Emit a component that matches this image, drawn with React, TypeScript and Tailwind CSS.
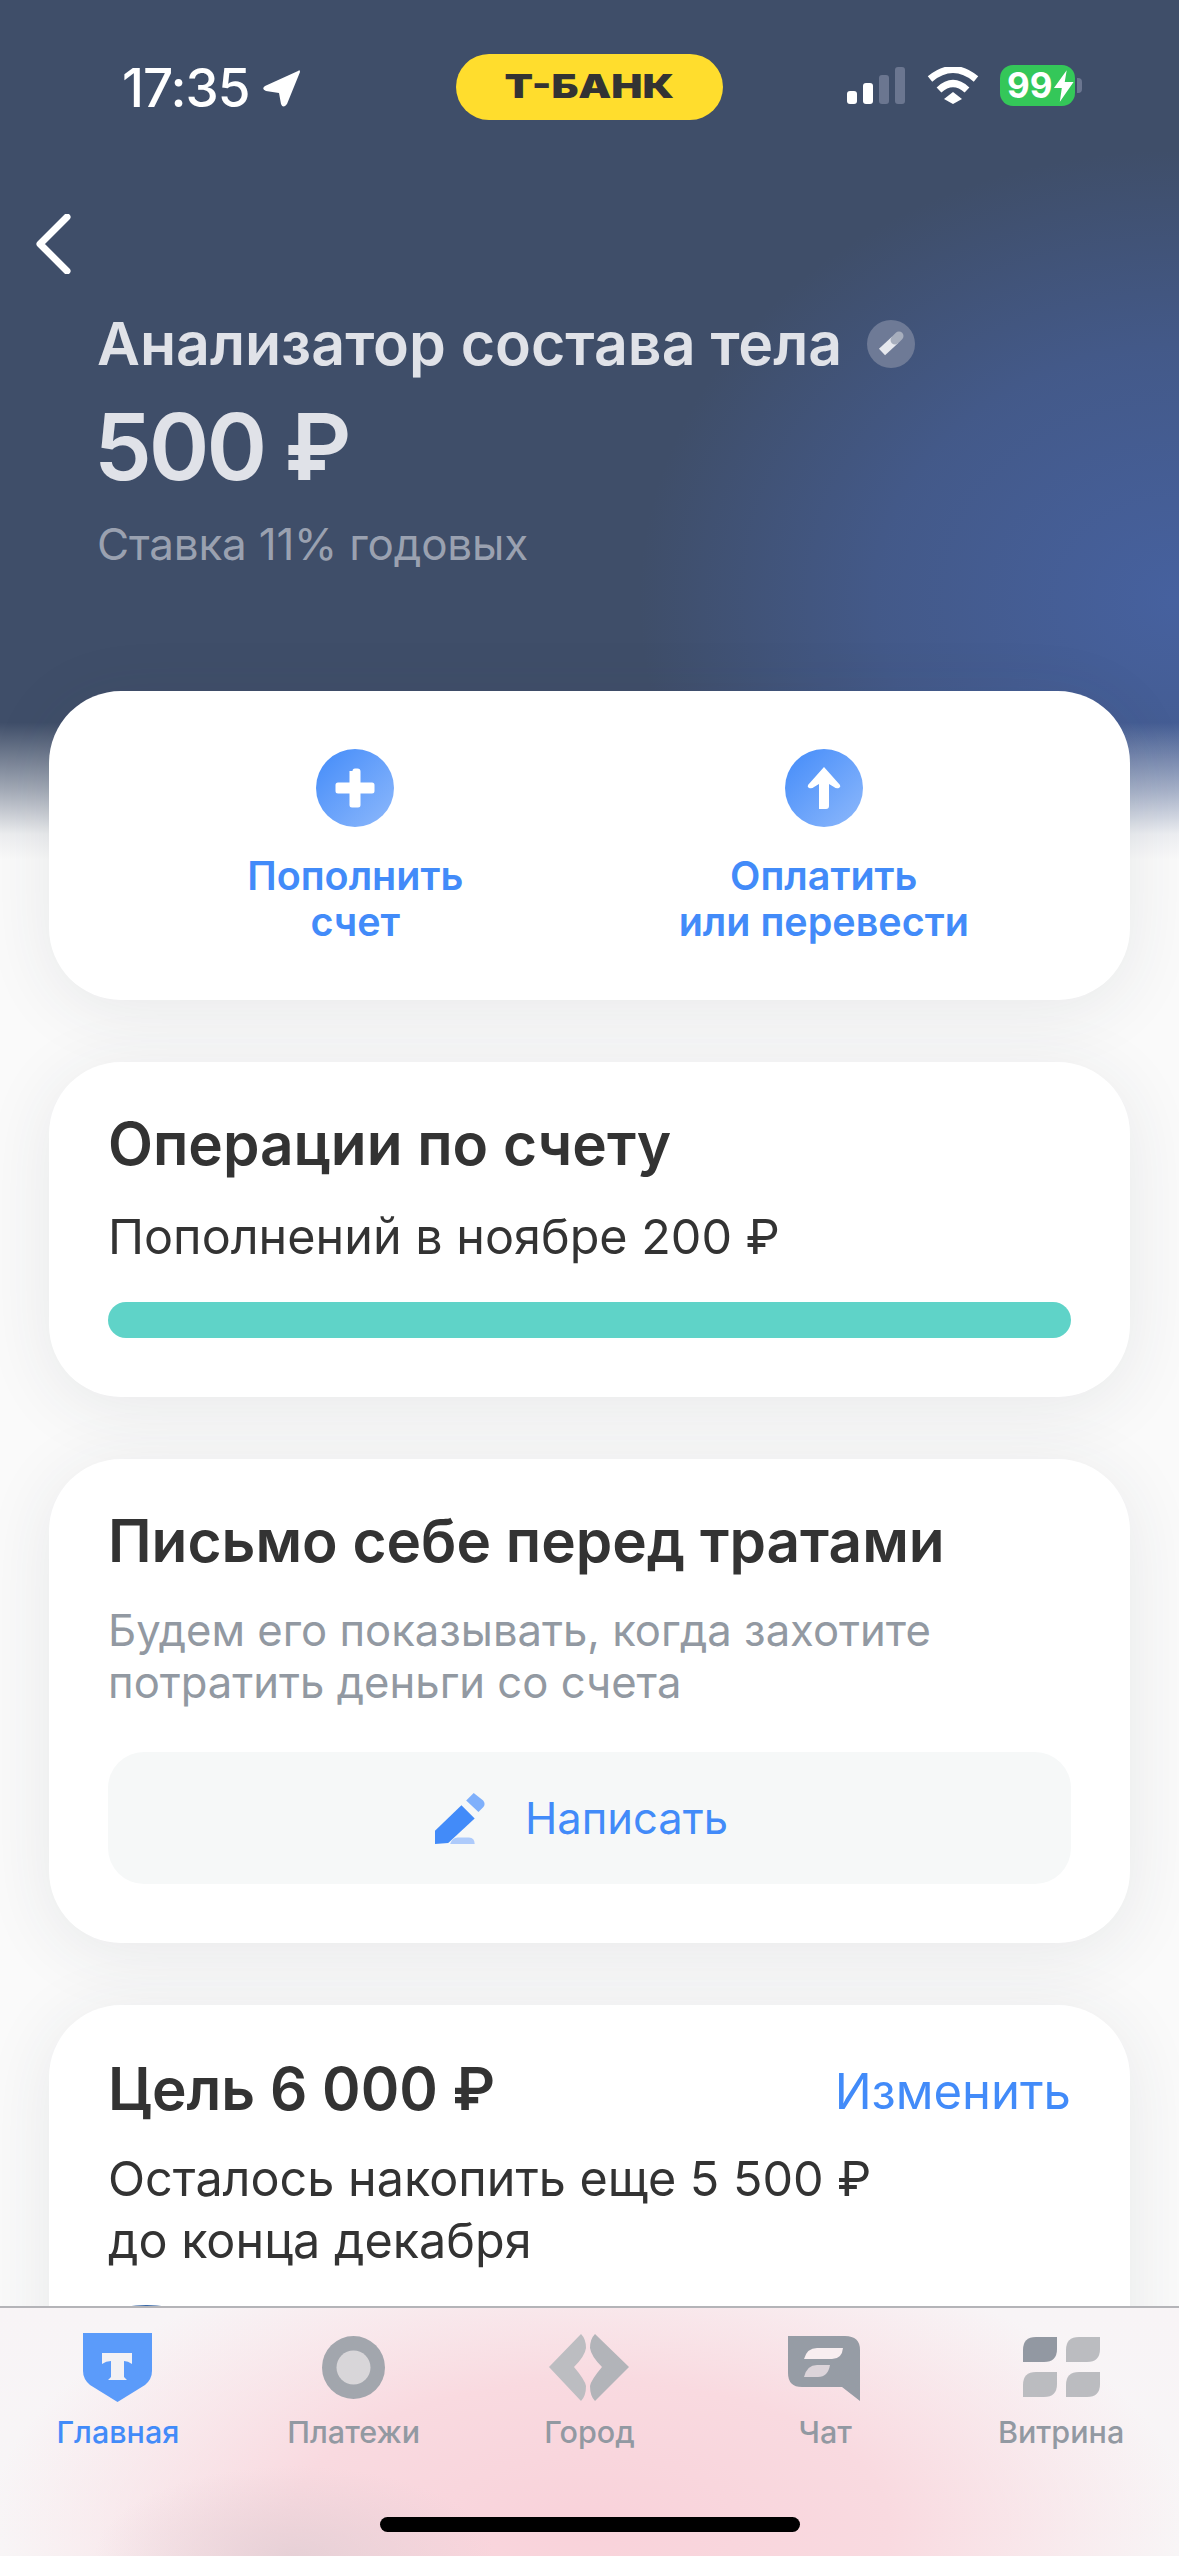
import React from 'react';

const font = { fontFamily: 'Inter, "Noto Sans", sans-serif' };

const StatusBar = () => (
  <div className="flex h-[142px] items-start justify-between pl-[122px] pr-[104px] pt-[54px]">
    <div className="flex w-[216px] items-center gap-[12px] pt-[6px]">
      <span className="text-[53px] font-medium leading-[56px] tracking-[-1px] text-white">17:35</span>
      <svg width="40" height="40" viewBox="0 0 40 40" className="mt-[2px]">
        <path d="M36 2 Q38 0 38 3 L25 35 Q21 40 19 35 L17 24 L4 22 Q-1 20 3 17 Z" fill="#fff" />
      </svg>
    </div>
    <div className="flex h-[66px] w-[267px] items-center justify-center rounded-[33px] bg-[#ffdd2d] text-[33px] font-black text-[#333]">
      <span className="inline-block scale-x-[1.26]">Т-БАНК</span>
    </div>
    <div className="flex w-[235px] items-start justify-end pt-[13px]">
      <div className="flex h-[37px] items-end gap-[6px]">
        <div className="h-[13px] w-[10px] rounded-[3px] bg-white" />
        <div className="h-[21px] w-[10px] rounded-[3px] bg-white" />
        <div className="h-[29px] w-[10px] rounded-[3px] bg-[#6b7690]" />
        <div className="h-[37px] w-[10px] rounded-[3px] bg-[#6b7690]" />
      </div>
      <svg width="52" height="38" viewBox="0 0 52 38" className="ml-[22px]">
        <path d="M26 26 L35 33 L26 38 L17 33 Z" fill="#fff" transform="translate(0 -1)" />
        <path d="M12 23 Q26 10 40 23" stroke="#fff" strokeWidth="7" fill="none" />
        <path d="M3 12 Q26 -7 49 12" stroke="#fff" strokeWidth="7" fill="none" />
      </svg>
      <div className="relative ml-[21px] flex h-[41px] w-[75px] -translate-y-[2px] items-center justify-start rounded-[13px] bg-[#34c759] pl-[7px] text-[35px] font-bold leading-none text-white">
        99
        <svg width="22" height="32" viewBox="0 0 22 32" className="ml-[1px]">
          <path d="M14 0 L1 18 H9 L7 32 L21 12 H12 Z" fill="#fff" />
        </svg>
        <div className="absolute left-[77px] top-[13px] h-[15px] w-[5px] rounded-r-[4px] bg-[#6b7690]" />
      </div>
    </div>
  </div>
);

const Card = ({ children, className = '' }: { children: React.ReactNode; className?: string }) => (
  <div className={`rounded-[72px] bg-white shadow-[0_10px_70px_rgba(40,50,70,0.09)] ${className}`}>{children}</div>
);

const ActionButton = ({ icon, lines }: { icon: React.ReactNode; lines: string[] }) => (
  <div className="flex flex-col items-center">
    <div className="flex h-[78px] w-[78px] items-center justify-center rounded-full bg-gradient-to-br from-[#428bf9] to-[#8db8fb]">{icon}</div>
    <div className="mt-[26px] text-center text-[39.5px] font-semibold leading-[46px] text-[#428bf9]">
      {lines.map(l => (
        <div key={l}>{l}</div>
      ))}
    </div>
  </div>
);

const Tab = ({ icon, label, active }: { icon: React.ReactNode; label: string; active?: boolean }) => (
  <div className="flex flex-col items-center">
    <div className="flex h-[72px] items-center justify-center">{icon}</div>
    <span className={`mt-[11px] text-[30.5px] font-medium leading-[36px] ${active ? 'text-[#428bf9]' : 'text-[#9299a2]'}`}>{label}</span>
  </div>
);

const LEAF = 'M0 13 Q0 0 13 0 H34 V12 Q34 25 21 25 H0 Z';

const TabBar = () => (
  <div className="absolute bottom-0 left-0 h-[250px] w-full border-t-[2px] border-[#b4b4b8] bg-[radial-gradient(ellipse_200px_90px_at_25%_100%,rgba(226,206,212,0.8)_0%,rgba(226,206,212,0)_100%),radial-gradient(ellipse_600px_290px_at_50%_88%,#f9d2da_0%,#f9dae0_50%,rgba(248,240,243,0)_100%),linear-gradient(#f8f4f6,#f8f6f7)] pt-[23px]">
    <div className="grid grid-cols-5">
      <Tab
        active
        label="Главная"
        icon={
          <svg width="69" height="69" viewBox="0 0 69 69">
            <path d="M0 0 H69 V38 Q69 46 62 52 L34.5 69 L7 52 Q0 46 0 38 Z" fill="#5b9bfa" />
            <path d="M19 20 H49 V31 Q45 28 41 28 V44 L44 47 H25 L28 44 V28 Q23 28 19 31 Z" fill="#f3f1f4" />
          </svg>
        }
      />
      <Tab
        label="Платежи"
        icon={
          <svg width="63" height="63" viewBox="0 0 63 63">
            <circle cx="31.5" cy="31.5" r="31.5" fill="#a2a6ad" />
            <circle cx="31.5" cy="31.5" r="17" fill="#d8d6d9" />
          </svg>
        }
      />
      <Tab
        label="Город"
        icon={
          <svg width="80" height="67" viewBox="0 0 80 67">
            <path d="M32 0 L0 33 L32 67 Q37 62 37 52 Q36 46 25 33 Q36 22 37 14 Q37 5 32 0 Z" fill="#bcbdc1" />
            <path d="M46 0 L80 33 L46 67 Q41 62 41 52 Q42 46 53 33 Q42 22 41 14 Q41 5 46 0 Z" fill="#b2b4b9" />
          </svg>
        }
      />
      <Tab
        label="Чат"
        icon={
          <svg width="72" height="65" viewBox="0 0 72 65" className="-translate-x-[1px] translate-y-[1px]">
            <path d="M0 0 H57 Q72 0 72 14 V65 L54 51 H14 Q0 51 0 37 Z" fill="#969ca5" />
            <path d="M16 23 Q19 12 29 12 H55 Q54 23 44 23 Z" fill="#f8eef0" />
            <path d="M16 41 Q19 29 29 29 H42 Q40 41 30 41 Z" fill="#dcd4da" />
          </svg>
        }
      />
      <Tab
        label="Витрина"
        icon={
          <svg width="77" height="60" viewBox="0 0 77 60">
            <path d={LEAF} fill="#9298a2" />
            <path d={LEAF} fill="#bbbcc0" transform="translate(43 0)" />
            <path d={LEAF} fill="#bbbcc0" transform="translate(0 35)" />
            <path d={LEAF} fill="#bbbcc0" transform="translate(43 35)" />
          </svg>
        }
      />
    </div>
    <div className="absolute bottom-[24px] left-[380px] h-[15px] w-[420px] rounded-full bg-black" />
  </div>
);

export default function App() {
  return (
    <div className="relative h-[2556px] w-[1179px] overflow-hidden bg-[#fafafa]" style={font}>
      <div className="absolute left-0 top-0 h-[860px] w-full bg-[linear-gradient(to_bottom,rgba(250,250,250,0)_84%,rgba(250,250,250,0.55)_92%,rgba(250,250,250,0.93)_97%,#fafafa_100%),radial-gradient(ellipse_540px_450px_at_100%_600px,#46619f_0%,rgba(70,97,159,0.6)_55%,rgba(63,78,105,0)_100%),linear-gradient(#3f4e69,#3f4e69)]" />
      <div className="relative">
        <StatusBar />
        <div className="pl-[36px]">
          <svg width="36" height="60" viewBox="0 0 36 60" className="mt-[72px]">
            <path d="M31 3 L4 30 L31 57" stroke="#fff" strokeWidth="7" fill="none" strokeLinecap="round" strokeLinejoin="round" />
          </svg>
        </div>
        <div className="mt-[35px] pl-[97px]">
          <div className="flex items-center">
            <span className="text-[59px] font-semibold leading-[70px] text-[#e0e2e8]">Анализатор состава тела</span>
            <div className="ml-[25px] flex h-[48px] w-[48px] items-center justify-center rounded-full bg-[#6e7a96]">
              <svg width="48" height="48" viewBox="0 0 48 48">
                <path d="M15 32 L28 20" stroke="#e6e8ee" strokeWidth="9" />
                <path d="M28 20 L32 16" stroke="#a7aebd" strokeWidth="9" strokeLinecap="round" />
              </svg>
            </div>
          </div>
          <div className="-ml-[3px] mt-[18px] text-[92px] font-semibold leading-[100px] tracking-[-3px] text-[#e0e2e8]">500 ₽</div>
          <div className="mt-[20px] text-[44px] leading-[54px] tracking-[-0.2px] text-[#9aa1b0]">Ставка 11% годовых</div>
        </div>

        <div className="mt-[120px] flex flex-col gap-[62px] px-[49px]">
          <Card className="h-[309px] pt-[58px]">
            <div className="grid grid-cols-2 px-[72px]">
              <ActionButton
                lines={['Пополнить', 'счет']}
                icon={
                  <svg width="48" height="48" viewBox="0 0 48 48">
                    <path d="M21.5 7 Q21.5 4.5 24 4.5 H26.5 Q29.5 4.5 29.5 7.5 V18.5 H41 Q43.5 18.5 43.5 21 V27 Q43.5 29.5 41 29.5 H29.5 V41 Q29.5 43.5 27 43.5 H21 Q18.5 43.5 18.5 41 V29.5 H7 Q4.5 29.5 4.5 27 V21 Q4.5 18.5 7 18.5 H18.5 V7 Z" fill="#fff" />
                  </svg>
                }
              />
              <ActionButton
                lines={['Оплатить', 'или перевести']}
                icon={
                  <svg width="48" height="48" viewBox="0 0 48 48">
                    <path d="M24 3 L40 21 Q41 23 39 24 Q36 25 34 23 L29 20 V42 Q29 45 26 45 H19 V20 L14 23 Q12 25 9 24 Q7 23 8 21 Z" fill="#fff" />
                  </svg>
                }
              />
            </div>
          </Card>

          <Card className="h-[335px] px-[59px] pt-[48px]">
            <div className="text-[58.5px] font-semibold leading-[68px] text-[#333]">Операции по счету</div>
            <div className="mt-[30px] text-[48.5px] leading-[58px] text-[#333]">Пополнений в ноябре 200 ₽</div>
            <div className="mt-[36px] h-[36px] rounded-full bg-[#5fd3c8]" />
          </Card>

          <Card className="h-[484px] px-[59px] pt-[48px]">
            <div className="text-[58.5px] font-semibold leading-[68px] text-[#333]">Письмо себе перед тратами</div>
            <div className="mt-[30px] text-[43.6px] leading-[52px] text-[#9299a2]">
              Будем его показывать, когда захотите
              <br />
              потратить деньги со счета
            </div>
            <div className="mt-[43px] flex h-[132px] items-center justify-center gap-[39px] rounded-[36px] bg-[#f6f8f8] pr-[16px]">
              <svg width="51" height="53" viewBox="0 0 54 54">
                <path d="M0 54 V40 L28 13 L42 27 L14 53 Z" fill="#428bf9" />
                <path d="M33 8 L41 0 L51 8 Q54 12 51 15 L46 20 Z" fill="#7fb0fb" />
                <path d="M16 54 Q18 47 24 47 H36 Q42 47 42 54 Z" fill="#aecbfb" />
              </svg>
              <span className="text-[43.5px] leading-[52px] text-[#428bf9]">Написать</span>
            </div>
          </Card>

          <Card className="h-[600px] px-[59px] pt-[50px]">
            <div className="flex items-center justify-between">
              <span className="text-[58.5px] font-semibold leading-[68px] text-[#333]">Цель 6 000 ₽</span>
              <span className="translate-y-[3px] text-[49px] leading-[68px] text-[#428bf9]">Изменить</span>
            </div>
            <div className="mt-[25px] text-[48.5px] leading-[62px] text-[#333]">
              Осталось накопить еще 5 500 ₽
              <br />
              до конца декабря
            </div>
            <div className="ml-[12px] mt-[33px] h-[60px] w-[53px] rounded-t-[26px_6px] bg-[#3b6aa8]" />
          </Card>
        </div>
      </div>
      <TabBar />
    </div>
  );
}
